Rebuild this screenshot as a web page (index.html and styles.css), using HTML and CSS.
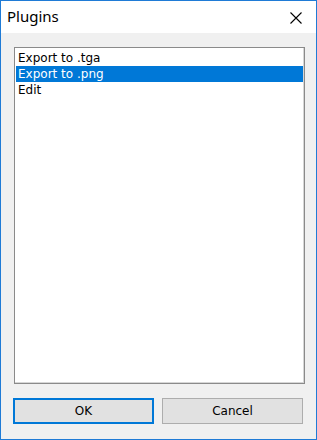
FILE: index.html
```html
<!DOCTYPE html>
<html>
<head>
<meta charset="utf-8">
<link rel="stylesheet" href="styles.css">
</head>
<body>
<div class="window">
  <div class="titlebar">
    <span class="title">Plugins</span>
    <svg class="close" width="12" height="12" viewBox="0 0 12 12"><path d="M0.5 0.5 L11.5 11.5 M11.5 0.5 L0.5 11.5" stroke="#000" stroke-width="1.1" fill="none"/></svg>
  </div>
  <div class="content">
    <ul class="listbox">
      <li class="item">Export to .tga</li>
      <li class="item selected">Export to .png</li>
      <li class="item">Edit</li>
    </ul>
    <div class="buttons">
      <button class="btn default">OK</button>
      <button class="btn">Cancel</button>
    </div>
  </div>
</div>
</body>
</html>
```
FILE: styles.css
```css
html, body {
  margin: 0;
  padding: 0;
  background: #f0f0f0;
}
.window {
  width: 317px;
  height: 440px;
  box-sizing: border-box;
  border: 1px solid #1f7bd6;
  display: flex;
  flex-direction: column;
  font-family: "Noto Sans", "Liberation Sans", sans-serif;
}
.titlebar {
  height: 32px;
  background: #ffffff;
  display: flex;
  align-items: center;
  justify-content: space-between;
  padding: 0 14px 0 6px;
  flex: none;
}
.title {
  font-size: 15px;
  color: #000;
  margin-top: -2px;
}
.close {
  display: block;
  margin-top: 1px;
}
.content {
  flex: 1;
  background: #f0f0f0;
  padding: 14px 11px 15px 13px;
  display: flex;
  flex-direction: column;
}
.listbox {
  list-style: none;
  margin: 0;
  padding: 2px 1px;
  flex: 1;
  background: #fff;
  border: 1px solid #8a8a8a;
  box-shadow: inset -1px -1px 0 #d6d6d6;
}
.item {
  height: 16px;
  line-height: 16px;
  padding-left: 2px;
  font-family: "DejaVu Sans", "Liberation Sans", sans-serif;
  font-size: 12px;
  color: #000;
  white-space: nowrap;
  overflow: hidden;
}
.item.selected {
  background: #0078d7;
  color: #fff;
}
.buttons {
  display: flex;
  gap: 8px;
  margin-top: 14px;
  margin-left: -1px;
}
.btn {
  width: 141px;
  height: 26px;
  box-sizing: border-box;
  background: #e1e1e1;
  border: 1px solid #adadad;
  font-family: "DejaVu Sans", "Liberation Sans", sans-serif;
  font-size: 12px;
  color: #000;
  padding: 0;
  margin: 0;
}
.btn.default {
  border: 2px solid #0078d7;
}
```
